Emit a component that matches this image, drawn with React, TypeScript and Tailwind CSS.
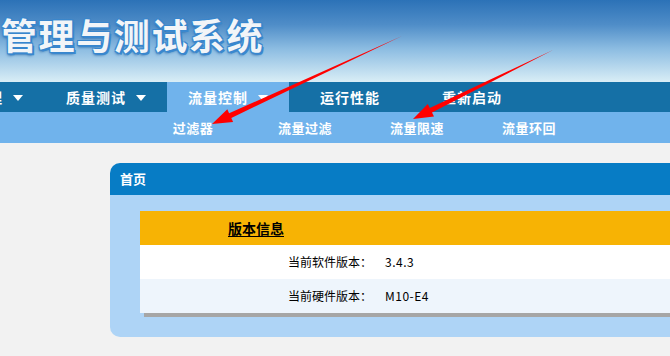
import React from "react";

const cjk = { fontFamily: '"Noto Sans CJK SC", "Noto Sans", sans-serif' };

function Caret() {
  return (
    <span className="inline-block w-0 h-0 border-l-[5px] border-r-[5px] border-t-[6px] border-l-transparent border-r-transparent border-t-white ml-[10px] mt-[2px]" />
  );
}

const navItems = [
  { label: "系统管理", caret: true },
  { label: "质量测试", caret: true },
  { label: "流量控制", caret: true, active: true },
  { label: "运行性能", caret: false },
  { label: "重新启动", caret: false },
];

const subItems = ["过滤器", "流量过滤", "流量限速", "流量环回"];

export default function App() {
  return (
    <div className="relative w-[670px] h-[356px] overflow-hidden bg-[#f2f2f2]" style={cjk}>
      {/* Header banner */}
      <div className="h-[82px] bg-[linear-gradient(to_bottom,#2c72b7_0%,#4f8dc8_30%,#8dbde2_60%,#d9eef6_100%)] flex items-start pt-[12px] pl-[1px]">
        <div className="text-[36px] font-bold leading-[44px] tracking-[1.6px] text-[#f2f5f8] [text-shadow:0_0_1px_#2a7bc4,1px_1px_0_#3a88cf,-1px_-1px_0_#3a88cf,1px_-1px_0_#3a88cf,-1px_1px_0_#3a88cf,2px_2px_0_#3a88cf,0_2px_3px_#1c5e9e]">
          管理与测试系统
        </div>
      </div>

      {/* Main nav */}
      <div className="h-[30px] bg-[#1570a6] flex ml-[-79px]">
        {navItems.map((it, i) => (
          <div
            key={it.label}
            className={`${i === 0 ? "w-[124px]" : "w-[122px]"} shrink-0 flex items-center justify-center text-white text-[14px] font-bold tracking-[1px] ${it.active ? "bg-[#70b3ec]" : ""}`}
          >
            <span>{it.label}</span>
            {it.caret && <Caret />}
          </div>
        ))}
      </div>

      {/* Sub nav */}
      <div className="h-[31px] bg-[#70b3ec] flex pl-[137px]">
        {subItems.map((s) => (
          <div key={s} className="w-[112px] shrink-0 flex items-center justify-center text-white text-[13px] font-bold tracking-[0.5px] pt-[1px]">
            {s}
          </div>
        ))}
      </div>

      {/* Content card */}
      <div className="pt-[20px] pl-[110px]">
        <div className="w-[600px]">
          <div className="h-[32px] bg-[#077cc5] rounded-tl-[10px] flex items-center pl-[10px] text-white text-[13px] font-bold">
            首页
          </div>
          <div className="bg-[#aed4f6] rounded-bl-[10px] pt-[16px] pb-[24px] pl-[30px]">
            <div className="shadow-[4px_4px_0_#a6a6a6]">
              <div className="h-[34px] bg-[#f7b304] flex items-center">
                <div className="w-[232px] text-center text-[14px] font-bold underline underline-offset-[2px] text-black">
                  版本信息
                </div>
              </div>
              <div className="h-[34px] bg-white flex items-center text-[12px] text-black">
                <div className="w-[232px] text-right">当前软件版本：</div>
                <div className="pl-[13px] tracking-[0.5px]">3.4.3</div>
              </div>
              <div className="h-[34px] bg-[#eef5fc] flex items-center text-[12px] text-black">
                <div className="w-[232px] text-right">当前硬件版本：</div>
                <div className="pl-[13px] tracking-[0.5px]">M10-E4</div>
              </div>
            </div>
          </div>
        </div>
      </div>

      {/* Red annotation arrows */}
      <svg className="absolute left-0 top-0 pointer-events-none" width="670" height="356" viewBox="0 0 670 356">
        <polygon
          points="402,36 231.3,117.9 233.1,122.0 212,124 227.3,109.2 229.1,113.3"
          fill="#ff0000"
        />
        <polygon
          points="553,50 432.0,112.4 434.0,116.5 413,119 427.8,103.9 429.8,108.0"
          fill="#ff0000"
        />
      </svg>
    </div>
  );
}
